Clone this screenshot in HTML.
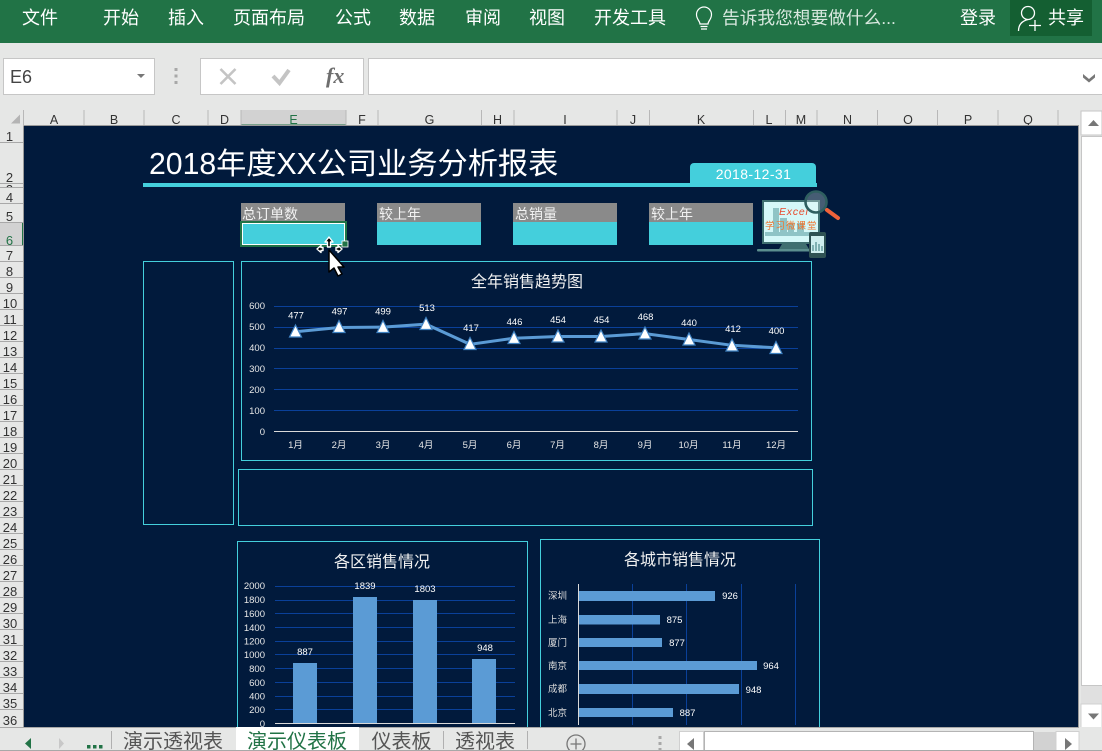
<!DOCTYPE html>
<html lang="zh"><head><meta charset="utf-8"><title>Excel</title>
<style>
html,body{margin:0;padding:0;width:1102px;height:751px;overflow:hidden;background:#e6e7e6}
svg{display:block;position:absolute;left:0;top:0}
text{font-family:"Liberation Sans","Noto Sans CJK SC",sans-serif}
.rb{font-size:18px;fill:#fff}
.c{font-size:12.5px;fill:#333;text-anchor:middle}
.r{font-size:13px;fill:#333;text-anchor:middle}
.v{font-size:9.5px;fill:#fff;text-anchor:middle}
.ax{font-size:9.5px;fill:#e8e8e8;text-anchor:end}
.m{font-size:9.5px;fill:#e8e8e8;text-anchor:middle}
.ct{font-size:16px;fill:#f0f0f0;text-anchor:middle}
.k{font-size:14px;fill:#f2f2f2}
.tab{font-size:20px;fill:#555}
.cy{font-size:9.5px;fill:#dcdcdc}
</style></head><body>
<svg width="1102" height="751" viewBox="0 0 1102 751" xmlns="http://www.w3.org/2000/svg">
<defs><clipPath id="r3"><rect x="0" y="184" width="23" height="3"/></clipPath></defs>
<!-- ribbon -->
<rect width="1102" height="43" fill="#217346"/>
<rect x="1010" y="0" width="82" height="36" fill="#145f32"/>
<text class="rb" x="22" y="24">文件</text>
<text class="rb" x="103" y="24">开始</text>
<text class="rb" x="168" y="24">插入</text>
<text class="rb" x="233" y="24">页面布局</text>
<text class="rb" x="335" y="24">公式</text>
<text class="rb" x="399" y="24">数据</text>
<text class="rb" x="465" y="24">审阅</text>
<text class="rb" x="529" y="24">视图</text>
<text class="rb" x="594" y="24">开发工具</text>
<path d="M700 24c0-3-3.500-4.500-3.500-9.500a7.500 7.500 0 0 1 15 0c0 5-3.500 6.500-3.500 9.500zM700.500 26.500h7M701 29h6" fill="none" stroke="#fff" stroke-width="1.200"/>
<text class="rb" x="722" y="24" style="fill:#d8e8df;font-size:17.700px">告诉我您想要做什么...</text>
<text class="rb" x="960" y="24">登录</text>
<circle cx="1028" cy="13" r="6.500" fill="none" stroke="#fff" stroke-width="1.300"/>
<path d="M1018.500 31c0-6 3.500-10 9.500-11.500M1029 25.500h12M1035 20v11" fill="none" stroke="#fff" stroke-width="1.300"/>
<text class="rb" x="1048" y="24">共享</text>

<!-- formula bar -->
<rect x="3.500" y="58.500" width="151" height="36" fill="#fff" stroke="#c6c6c6"/>
<text x="10" y="83" style="font-size:18px;fill:#444">E6</text>
<path d="M137 74h8l-4 4z" fill="#777"/>
<rect x="174.500" y="68" width="3" height="3" fill="#a8a8a8"/><rect x="174.500" y="74.500" width="3" height="3" fill="#a8a8a8"/><rect x="174.500" y="81" width="3" height="3" fill="#a8a8a8"/>
<rect x="200.500" y="58.500" width="163" height="36" fill="#fff" stroke="#c6c6c6"/>
<path d="M220.500 69l15 15M235.500 69l-15 15" stroke="#c4c4c4" stroke-width="2.600" fill="none"/>
<path d="M273 76l6.500 7 9.500-13" stroke="#c4c4c4" stroke-width="4" fill="none"/>
<text x="326" y="83" style="font-family:'Liberation Serif',serif;font-style:italic;font-weight:bold;font-size:22px;fill:#6e6e6e">fx</text>
<rect x="368.500" y="58.500" width="740" height="36" fill="#fff" stroke="#c6c6c6"/>
<path d="M1083 74l6 5 6-5v3.500l-6 5-6-5z" fill="#777"/>

<!-- headers -->
<rect x="0" y="110" width="1081" height="16" fill="#e6e7e6"/>
<rect x="241" y="110" width="105" height="16" fill="#d2d2d2"/>
<rect x="241" y="124.500" width="105" height="2" fill="#217346"/>
<path d="M11 123.500L20 114.500V123.500Z" fill="#b4b4b4"/>
<path d="M23.500 110v16M84 110v15M144 110v15M208 110v15M241 110v15M346 110v15M378 110v15M481.500 110v15M514 110v15M617 110v15M649.500 110v15M753.500 110v15M785.500 110v15M817 110v15M877.500 110v15M937.500 110v15M998 110v15M1058 110v15" stroke="#b8b8b8" stroke-width="1" fill="none"/>
<text class="c" x="54" y="124">A</text><text class="c" x="114" y="124">B</text><text class="c" x="176" y="124">C</text><text class="c" x="224.500" y="124">D</text><text class="c" x="293.500" y="124" style="fill:#217346">E</text><text class="c" x="362" y="124">F</text><text class="c" x="429.500" y="124">G</text><text class="c" x="497.500" y="124">H</text><text class="c" x="565" y="124">I</text><text class="c" x="633" y="124">J</text><text class="c" x="701" y="124">K</text><text class="c" x="769" y="124">L</text><text class="c" x="801" y="124">M</text><text class="c" x="847.500" y="124">N</text><text class="c" x="908" y="124">O</text><text class="c" x="968" y="124">P</text><text class="c" x="1028" y="124">Q</text>

<rect x="0" y="126" width="24" height="601" fill="#e6e7e6"/>
<rect x="0" y="222.500" width="24" height="23.500" fill="#d2d2d2"/>
<rect x="22" y="222" width="2" height="24" fill="#217346"/>
<path d="M0 142.500h23M0 183.500h23M0 187.500h23M0 203.500h23M0 222.500h23M0 245.500h23M0 261.500h23M0 277.500h23M0 293.500h23M0 309.500h23M0 325.500h23M0 341.500h23M0 357.500h23M0 373.500h23M0 389.500h23M0 405.500h23M0 421.500h23M0 437.500h23M0 453.500h23M0 469.500h23M0 485.500h23M0 501.500h23M0 517.500h23M0 533.500h23M0 549.500h23M0 565.500h23M0 581.500h23M0 597.500h23M0 613.500h23M0 629.500h23M0 645.500h23M0 661.500h23M0 677.500h23M0 693.500h23M0 709.500h23" stroke="#a8a8a8" stroke-width="1" fill="none"/>
<g>
<text class="r" x="9.500" y="141">1</text><text class="r" x="9.500" y="182">2</text><text class="r" x="9.500" y="194" clip-path="url(#r3)">3</text>
<text class="r" x="9.500" y="202">4</text><text class="r" x="9.500" y="221">5</text><text class="r" x="9.500" y="245" style="fill:#217346">6</text><text class="r" x="9.500" y="260">7</text><text class="r" x="9.500" y="276">8</text><text class="r" x="9.500" y="292">9</text>
<text class="r" x="10" y="308">10</text><text class="r" x="10" y="324">11</text><text class="r" x="10" y="340">12</text><text class="r" x="10" y="356">13</text><text class="r" x="10" y="372">14</text><text class="r" x="10" y="388">15</text><text class="r" x="10" y="404">16</text><text class="r" x="10" y="420">17</text><text class="r" x="10" y="436">18</text><text class="r" x="10" y="452">19</text><text class="r" x="10" y="468">20</text><text class="r" x="10" y="484">21</text><text class="r" x="10" y="500">22</text><text class="r" x="10" y="516">23</text><text class="r" x="10" y="532">24</text><text class="r" x="10" y="548">25</text><text class="r" x="10" y="564">26</text><text class="r" x="10" y="580">27</text><text class="r" x="10" y="596">28</text><text class="r" x="10" y="612">29</text><text class="r" x="10" y="628">30</text><text class="r" x="10" y="644">31</text><text class="r" x="10" y="660">32</text><text class="r" x="10" y="676">33</text><text class="r" x="10" y="692">34</text><text class="r" x="10" y="708">35</text><text class="r" x="10" y="725">36</text>
</g>

<!-- sheet -->
<rect x="24" y="126" width="1054" height="601" fill="#011a3c"/>
<path d="M23.500 126V727M24 125.500H1078.500V727" fill="none" stroke="#9a9a9a"/>

<!-- title -->
<text x="149" y="174" style="font-size:30.200px;fill:#fff">2018年度XX公司业务分析报表</text>
<rect x="143" y="183" width="674" height="4" fill="#44cfdc"/>
<path d="M690 183v-16a4 4 0 0 1 4-4h118a4 4 0 0 1 4 4v16z" fill="#44cfdc"/>
<text x="753.500" y="179" style="font-size:14px;fill:#fff;text-anchor:middle;letter-spacing:.4px">2018-12-31</text>

<!-- KPI -->
<rect x="241" y="203" width="104" height="19" fill="#8a8a8a"/><rect x="241" y="222" width="104" height="23" fill="#44cfdc"/>
<rect x="377" y="203" width="104" height="19" fill="#8a8a8a"/><rect x="377" y="222" width="104" height="23" fill="#44cfdc"/>
<rect x="513" y="203" width="104" height="19" fill="#8a8a8a"/><rect x="513" y="222" width="104" height="23" fill="#44cfdc"/>
<rect x="649" y="203" width="104" height="19" fill="#8a8a8a"/><rect x="649" y="222" width="104" height="23" fill="#44cfdc"/>
<text class="k" x="242" y="219">总订单数</text><text class="k" x="379" y="219">较上年</text><text class="k" x="515" y="219">总销量</text><text class="k" x="651" y="219">较上年</text>
<rect x="241" y="222" width="105" height="24" fill="none" stroke="#217346" stroke-width="2"/>
<rect x="242.500" y="223.500" width="102" height="21" fill="none" stroke="#fff" stroke-width="1"/>
<rect x="342" y="241" width="6" height="6" fill="#217346" stroke="#fff" stroke-width=".8"/>

<!-- logo -->
<g>
<rect x="763" y="201" width="56" height="42" fill="#d5f8f8" stroke="#3f6f70" stroke-width="2"/>
<path d="M773 232v-24h6v24zM780 232v-14h7v14zM788 232v-9h6v9zM797 232v-9h7v9z" fill="#8fc4c6"/>
<rect x="765" y="232" width="52" height="4" fill="#8fc4c6"/>
<text x="779" y="215" style="font-size:10.500px;font-style:italic;fill:#e8492c;letter-spacing:.8px">Excel</text>
<text x="765" y="229" style="font-size:9.500px;fill:#f0742d;letter-spacing:1px">学习微课堂</text>
<path d="M782 244h24l3 5h-30z" fill="#3f6f70"/>
<rect x="757" y="249" width="58" height="2.500" rx="1" fill="#5b8e8e"/>
<circle cx="816" cy="202" r="10.500" fill="#e8f8f8" fill-opacity=".3" stroke="#2f5f60" stroke-width="2.600"/>
<path d="M827 210l11 8" stroke="#f0623a" stroke-width="4" stroke-linecap="round"/>
<rect x="809" y="232" width="17" height="26" rx="2" fill="#2f5253"/>
<rect x="811" y="236" width="13" height="17" fill="#cfeeee"/>
<path d="M813 251v-6M816 251v-9M819 251v-7M822 251v-5" stroke="#6da2a4" stroke-width="1.600"/>
</g>

<!-- panels -->
<g fill="none" stroke="#44cfdc" stroke-width="1">
<rect x="143.500" y="261.500" width="90" height="263" />
<rect x="241.500" y="261.500" width="570" height="199"/>
<rect x="238.500" y="469.500" width="574" height="56"/>
<path d="M237.500 727V541.500H527.500V727M540.500 727V539.500H819.500V727"/>
</g>

<!-- line chart -->
<text class="ct" x="527" y="287">全年销售趋势图</text>
<path d="M274 306.500H798M274 327.500H798M274 348.500H798M274 368.500H798M274 389.500H798M274 410.500H798" stroke="#0a4099" stroke-width="1" fill="none"/>
<path d="M274 431.500H798" stroke="#d9d9d9" stroke-width="1"/>
<text class="ax" x="265" y="309">600</text><text class="ax" x="265" y="330">500</text><text class="ax" x="265" y="351">400</text><text class="ax" x="265" y="372">300</text><text class="ax" x="265" y="393">200</text><text class="ax" x="265" y="414">100</text><text class="ax" x="265" y="435">0</text>
<g>
<text class="m" x="295.500" y="448">1月</text><text class="m" x="339" y="448">2月</text><text class="m" x="383" y="448">3月</text><text class="m" x="426" y="448">4月</text><text class="m" x="470" y="448">5月</text><text class="m" x="514" y="448">6月</text><text class="m" x="557.500" y="448">7月</text><text class="m" x="601" y="448">8月</text><text class="m" x="645" y="448">9月</text><text class="m" x="688.500" y="448">10月</text><text class="m" x="732" y="448">11月</text><text class="m" x="776" y="448">12月</text>
</g>
<polyline points="295.500,331.700 339,327.500 383,327.100 426,324.200 470,344.300 514,338.200 558,336.500 601,336.500 645,333.600 689,339.500 732,345.300 776,347.800" fill="none" stroke="#5b9bd5" stroke-width="3"/>
<g fill="#fff" stroke="#3f82c2" stroke-width="1.200">
<path d="M295.500 325l6 12h-12z"/><path d="M339 320.500l6 12h-12z"/><path d="M383 320.500l6 12h-12z"/><path d="M426 317.500l6 12h-12z"/><path d="M470 337.500l6 12h-12z"/><path d="M514 331.500l6 12h-12z"/><path d="M558 330l6 12h-12z"/><path d="M601 330l6 12h-12z"/><path d="M645 327l6 12h-12z"/><path d="M689 333l6 12h-12z"/><path d="M732 339l6 12h-12z"/><path d="M776 341.500l6 12h-12z"/>
</g>
<g>
<text class="v" x="296" y="318.500">477</text><text class="v" x="339.500" y="314.500">497</text><text class="v" x="383" y="314.500">499</text><text class="v" x="427" y="311">513</text><text class="v" x="471" y="331">417</text><text class="v" x="514.500" y="325">446</text><text class="v" x="558" y="323">454</text><text class="v" x="601.500" y="323">454</text><text class="v" x="645.500" y="320">468</text><text class="v" x="689" y="326">440</text><text class="v" x="733" y="332">412</text><text class="v" x="776.500" y="334">400</text>
</g>

<!-- column chart -->
<text class="ct" x="382" y="567">各区销售情况</text>
<path d="M275 586.500H515M275 600.500H515M275 613.500H515M275 627.500H515M275 641.500H515M275 654.500H515M275 668.500H515M275 682.500H515M275 696.500H515M275 709.500H515" stroke="#0a4099" stroke-width="1" fill="none"/>
<rect x="293" y="663" width="24" height="60" fill="#5b9bd5"/><rect x="353" y="597" width="24" height="126" fill="#5b9bd5"/><rect x="413" y="600" width="24" height="123" fill="#5b9bd5"/><rect x="472" y="659" width="24" height="64" fill="#5b9bd5"/>
<path d="M275 723.500H515" stroke="#d9d9d9" stroke-width="1"/>
<text class="ax" x="265" y="589">2000</text><text class="ax" x="265" y="603">1800</text><text class="ax" x="265" y="617">1600</text><text class="ax" x="265" y="631">1400</text><text class="ax" x="265" y="644.500">1200</text><text class="ax" x="265" y="658">1000</text><text class="ax" x="265" y="672">800</text><text class="ax" x="265" y="686">600</text><text class="ax" x="265" y="699.500">400</text><text class="ax" x="265" y="713">200</text><text class="ax" x="265" y="727">0</text>
<text class="v" x="305" y="655">887</text><text class="v" x="365" y="589">1839</text><text class="v" x="425" y="592">1803</text><text class="v" x="485" y="651">948</text>

<!-- bar chart -->
<text class="ct" x="680" y="565">各城市销售情况</text>
<path d="M632.500 584V725M686.500 584V725M741.500 584V725M795.500 584V725" stroke="#0a4099" stroke-width="1" fill="none"/>
<rect x="578" y="591" width="137" height="10" fill="#5b9bd5"/><rect x="578" y="615" width="82" height="9.500" fill="#5b9bd5"/><rect x="578" y="638" width="84" height="9" fill="#5b9bd5"/><rect x="578" y="661" width="179" height="9" fill="#5b9bd5"/><rect x="578" y="684" width="161" height="10" fill="#5b9bd5"/><rect x="578" y="708" width="95" height="9" fill="#5b9bd5"/>
<path d="M578.500 584V725" stroke="#d9d9d9" stroke-width="1"/>
<text class="cy" x="548" y="599">深圳</text><text class="cy" x="548" y="623">上海</text><text class="cy" x="548" y="646">厦门</text><text class="cy" x="548" y="669">南京</text><text class="cy" x="548" y="692">成都</text><text class="cy" x="548" y="716">北京</text>
<text class="v" x="730" y="599">926</text><text class="v" x="674.500" y="623">875</text><text class="v" x="677" y="646">877</text><text class="v" x="771" y="669">964</text><text class="v" x="753.500" y="693">948</text><text class="v" x="687.500" y="716">887</text>

<!-- move cursor -->
<g stroke-linejoin="round">
<path d="M329 237l4 5h-2.500v5h-3v-5H325zM317 249l4-3.500v2h2v3h-2v2zM342 249l-4-3.500v2h-2v3h2v2z" fill="#000" stroke="#fff" stroke-width="1.400"/>
<path d="M329 250v22l5-4 4 8 4-2-4-7h6z" fill="#fff" stroke="#000" stroke-width="1.500"/>
</g>

<!-- vertical scrollbar -->
<rect x="1081" y="111" width="21" height="24" fill="#fff" stroke="#c6c6c6"/>
<path d="M1088 126l5.500-6 5.500 6z" fill="#777"/>
<rect x="1081.500" y="136.500" width="21" height="549" fill="#fff" stroke="#c6c6c6"/>
<rect x="1081" y="686" width="21" height="18" fill="#e0e0e0"/>
<rect x="1081" y="704" width="21" height="24" fill="#fff" stroke="#d0d0d0"/>
<path d="M1088 713.500h11l-5.500 6z" fill="#777"/>

<!-- tabs -->
<rect x="0" y="727" width="1102" height="24" fill="#e6e7e6"/>
<path d="M0 727.500H1079" stroke="#a8a8a8"/>
<rect x="236" y="727" width="123" height="24" fill="#fff"/>
<path d="M111.500 731V749M443.500 731V749M527.500 731V749" stroke="#b0b0b0"/>
<path d="M31 738l-6 5.500 6 5.500z" fill="#217346"/>
<path d="M59 738l5 5.500-5 5.500z" fill="#c8c8c8"/>
<rect x="87" y="745" width="3.500" height="3.500" fill="#217346"/><rect x="93" y="745" width="3.500" height="3.500" fill="#217346"/><rect x="99" y="745" width="3.500" height="3.500" fill="#217346"/>
<text class="tab" x="123" y="748">演示透视表</text>
<text class="tab" x="247" y="748" style="fill:#217346">演示仪表板</text>
<text class="tab" x="371.500" y="748">仪表板</text>
<text class="tab" x="455" y="748">透视表</text>
<circle cx="576" cy="744" r="9" fill="none" stroke="#777" stroke-width="1.300"/>
<path d="M570.500 744h11M576 738.500v11" stroke="#777" stroke-width="1.300"/>
<rect x="658.500" y="736" width="3" height="3" fill="#a8a8a8"/><rect x="658.500" y="742" width="3" height="3" fill="#a8a8a8"/><rect x="658.500" y="748" width="3" height="3" fill="#a8a8a8"/>

<!-- horizontal scrollbar -->
<rect x="679.500" y="731.500" width="24" height="20" fill="#fff" stroke="#d0d0d0"/>
<path d="M694 738l-7 6 7 6z" fill="#777"/>
<rect x="704.500" y="731.500" width="329" height="21" fill="#fff" stroke="#b4b4b4"/>
<rect x="1034" y="732" width="22" height="19" fill="#d2d2d2"/>
<rect x="1056" y="731.500" width="23" height="20" fill="#fff" stroke="#d0d0d0"/>
<path d="M1065 738l7 6-7 6z" fill="#777"/>
<path d="M0 750.500H1102" stroke="#a8a8a8"/>
</svg>
</body></html>
